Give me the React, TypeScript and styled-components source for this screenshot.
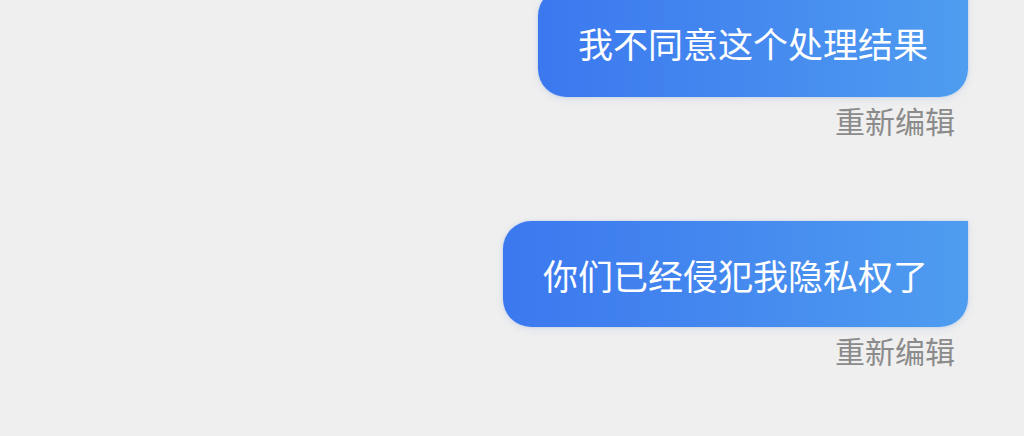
import * as React from 'react';
import styled, { createGlobalStyle } from 'styled-components';

const GlobalStyle = createGlobalStyle`
  html, body {
    margin: 0;
    padding: 0;
    background: #efefef;
  }
  body {
    font-family: "Noto Sans CJK SC", "Noto Sans", sans-serif;
  }
`;

const Page = styled.div`
  width: 1024px;
  height: 436px;
  overflow: hidden;
  background: #efefef;
  box-sizing: border-box;
  padding: 0 56px 0 0;
  display: flex;
  flex-direction: column;
  align-items: flex-end;
`;

const MessageGroup = styled.div<{ offsetTop: number }>`
  display: flex;
  flex-direction: column;
  align-items: flex-end;
  margin-top: ${(props): string => `${props.offsetTop}px`};
`;

const Bubble = styled.div<{ tall: number }>`
  height: ${(props): string => `${props.tall}px`};
  box-sizing: border-box;
  padding: 0 40px;
  display: flex;
  align-items: center;
  border-radius: 28px 0 28px 28px;
  background: linear-gradient(90deg, #3b78ef 0%, #4589ef 50%, #4e9df0 100%);
  box-shadow: 0 2px 8px rgba(60, 110, 200, 0.12), 0 0 2px rgba(120, 170, 240, 0.5);
  color: #ffffff;
  font-size: 35px;
  line-height: 1;
  letter-spacing: 0;
  white-space: nowrap;
`;

const EditLink = styled.div`
  margin: 8px 13px 0 0;
  color: #8b8b8b;
  font-size: 30px;
  line-height: 30px;
  white-space: nowrap;
`;

interface Message {
  text: string;
  offsetTop: number;
  tall: number;
}

const messages: Message[] = [
  { text: '我不同意这个处理结果', offsetTop: -12, tall: 109 },
  { text: '你们已经侵犯我隐私权了', offsetTop: 86, tall: 106 },
];

export default function App(): JSX.Element {
  return (
    <>
      <GlobalStyle />
      <Page>
        {messages.map((m) => (
          <MessageGroup key={m.text} offsetTop={m.offsetTop}>
            <Bubble tall={m.tall}>{m.text}</Bubble>
            <EditLink>重新编辑</EditLink>
          </MessageGroup>
        ))}
      </Page>
    </>
  );
}
